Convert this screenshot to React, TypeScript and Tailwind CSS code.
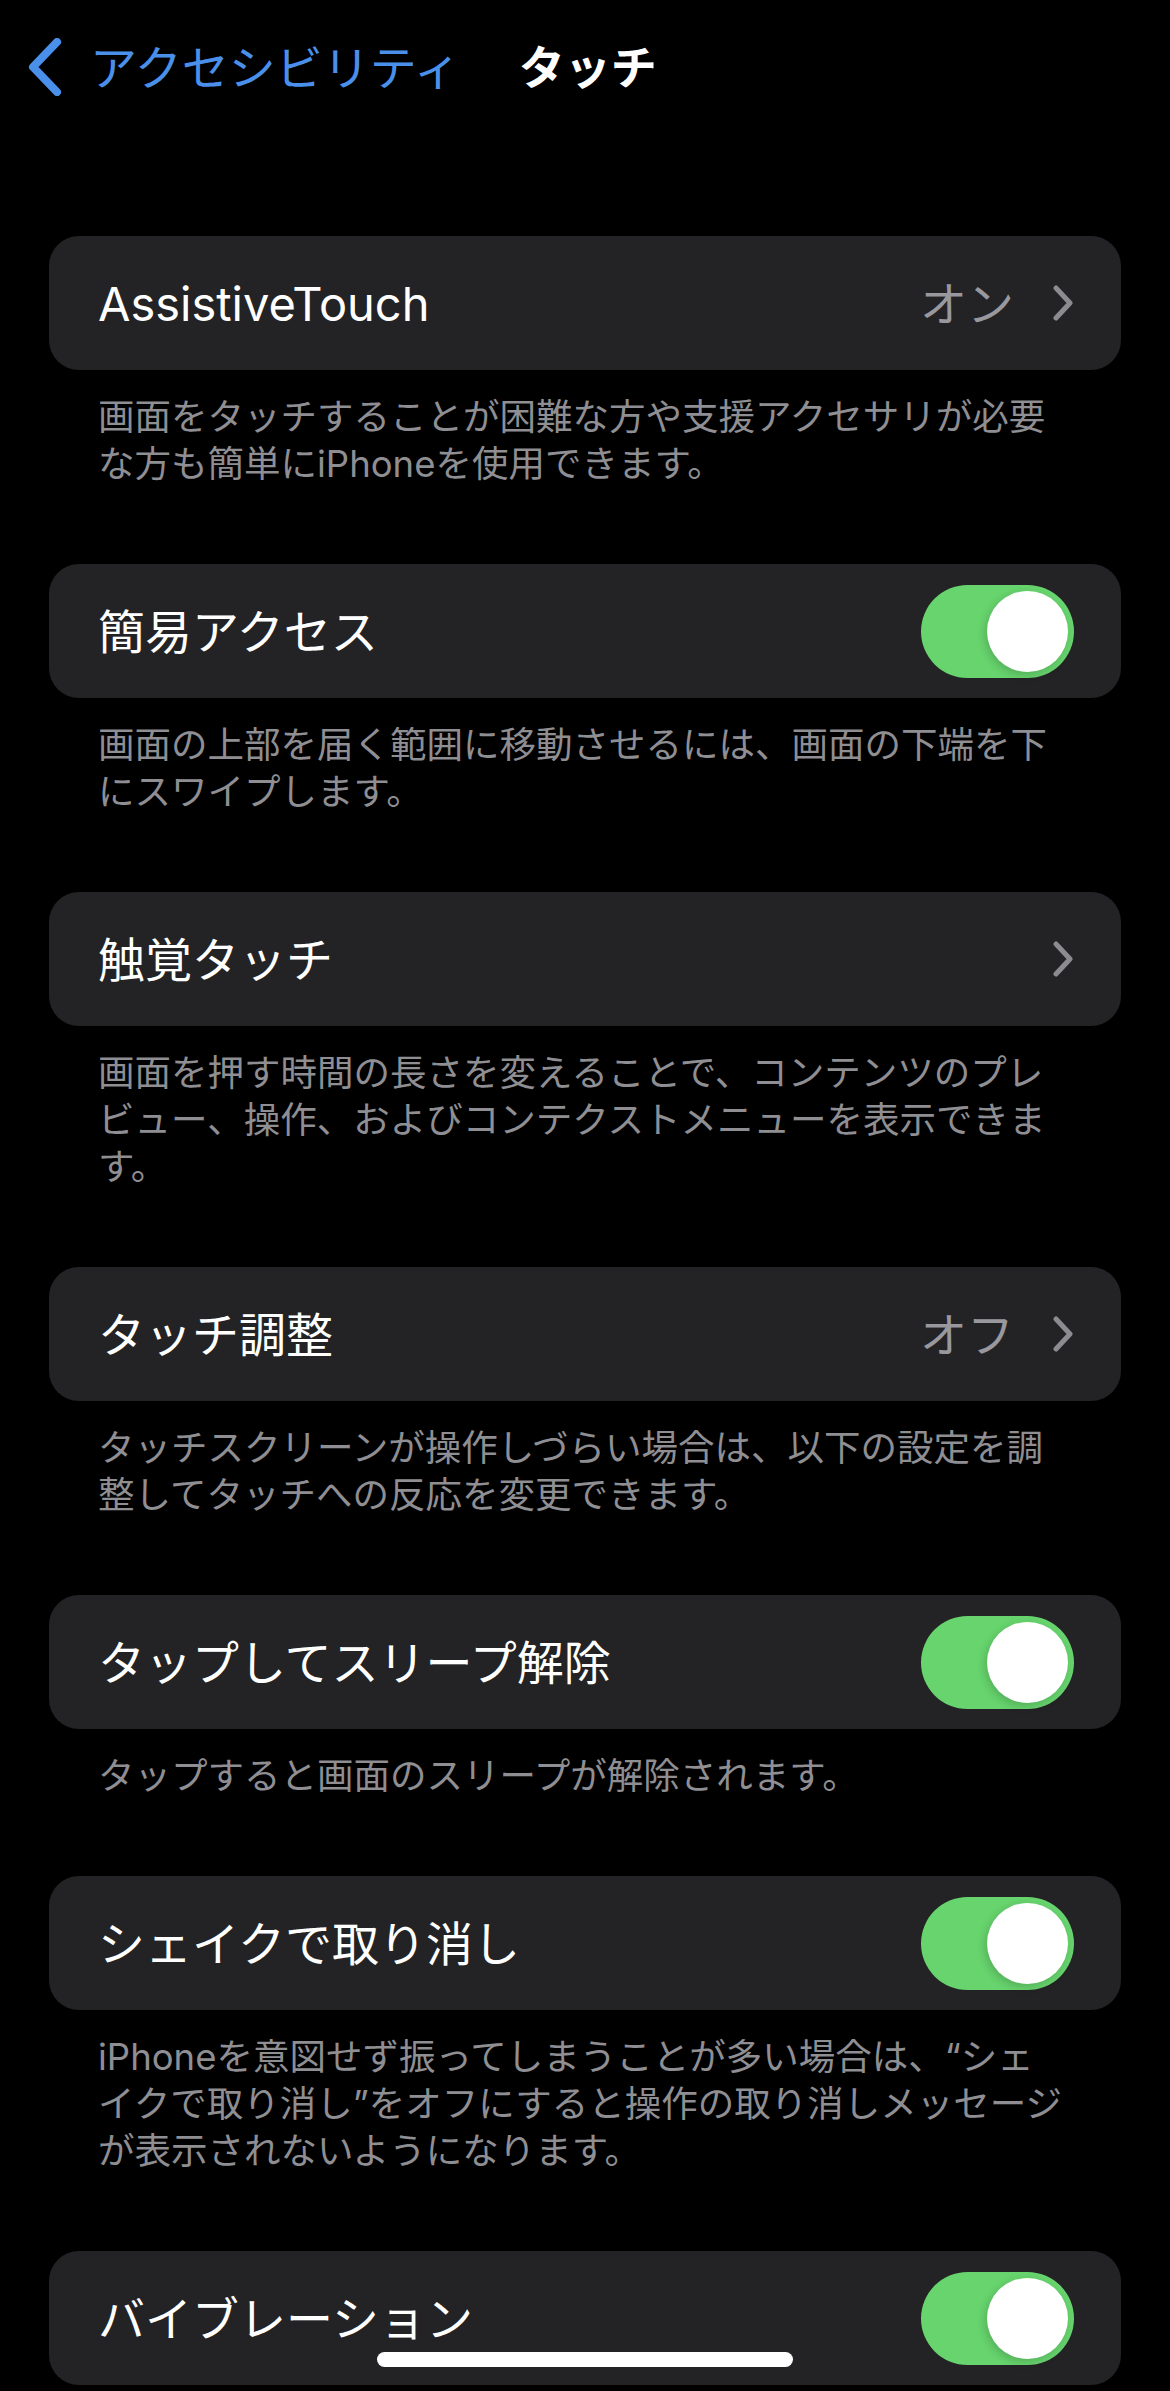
import React from 'react';

type Row = {
  title: string;
  kind: 'toggle' | 'link';
  value?: string;
  footer: string[];
};

const rows: Row[] = [
  {
    title: 'AssistiveTouch',
    kind: 'link',
    value: 'オン',
    footer: ['画面をタッチすることが困難な方や支援アクセサリが必要', 'な方も簡単にiPhoneを使用できます。'],
  },
  {
    title: '簡易アクセス',
    kind: 'toggle',
    footer: ['画面の上部を届く範囲に移動させるには、画面の下端を下', 'にスワイプします。'],
  },
  {
    title: '触覚タッチ',
    kind: 'link',
    footer: [
      '画面を押す時間の長さを変えることで、コンテンツのプレ',
      'ビュー、操作、およびコンテクストメニューを表示できま',
      'す。',
    ],
  },
  {
    title: 'タッチ調整',
    kind: 'link',
    value: 'オフ',
    footer: ['タッチスクリーンが操作しづらい場合は、以下の設定を調', '整してタッチへの反応を変更できます。'],
  },
  {
    title: 'タップしてスリープ解除',
    kind: 'toggle',
    footer: ['タップすると画面のスリープが解除されます。'],
  },
  {
    title: 'シェイクで取り消し',
    kind: 'toggle',
    footer: [
      'iPhoneを意図せず振ってしまうことが多い場合は、“シェ',
      'イクで取り消し”をオフにすると操作の取り消しメッセージ',
      'が表示されないようになります。',
    ],
  },
  {
    title: 'バイブレーション',
    kind: 'toggle',
    footer: [],
  },
];

const Toggle = () => (
  <div className="w-[153px] h-[93px] rounded-full bg-[#67d46d] flex items-center justify-end pr-[6px]">
    <div className="w-[81px] h-[81px] rounded-full bg-white shadow-[-2px_3px_8px_rgba(0,0,0,0.18)]" />
  </div>
);

const Chevron = () => (
  <svg width="22" height="36" viewBox="0 0 22 36" fill="none">
    <path d="M4 3 L18 18 L4 33" stroke="#8b8b90" strokeWidth="5" strokeLinecap="round" strokeLinejoin="round" />
  </svg>
);

const App = () => {
  return (
    <div
      className="relative w-[1170px] h-[2391px] overflow-hidden bg-black"
      style={{ fontFamily: 'Inter, "Noto Sans CJK JP", sans-serif' }}>
      <div className="flex items-center h-[134px] pl-[28px]">
        <svg width="34" height="58" viewBox="0 0 34 58" fill="none">
          <path d="M29 4 L5 29 L29 54" stroke="#4a90ea" strokeWidth="8" strokeLinecap="round" strokeLinejoin="round" />
        </svg>
        <span className="ml-[28px] text-[47px] leading-none text-[#4a90ea] whitespace-nowrap">アクセシビリティ</span>
        <span className="ml-[58px] text-[46px] leading-none font-bold text-white whitespace-nowrap">タッチ</span>
      </div>

      <div className="pt-[102px] px-[49px]">
        {rows.map((row) => (
          <div key={row.title} className="mb-[76px]">
            <div className="h-[134px] rounded-[30px] bg-[#232325] flex items-center justify-between pl-[49px] pr-[47px]">
              <span className="text-[47px] leading-none text-white whitespace-nowrap">{row.title}</span>
              {row.kind === 'toggle' ? (
                <Toggle />
              ) : (
                <div className="flex items-center">
                  {row.value && (
                    <span className="text-[47px] leading-none text-[#98989e] mr-[38px]">{row.value}</span>
                  )}
                  <Chevron />
                </div>
              )}
            </div>
            {row.footer.length > 0 && (
              <div className="mt-[24px] px-[49px] text-[36.5px] leading-[47px] text-[#8e8e93]">
                {row.footer.map((line) => (
                  <div key={line} className="whitespace-nowrap">
                    {line}
                  </div>
                ))}
              </div>
            )}
          </div>
        ))}
      </div>

      <div className="absolute bottom-[24px] left-1/2 -translate-x-1/2 w-[416px] h-[15px] rounded-full bg-white" />
    </div>
  );
};

export default App;
